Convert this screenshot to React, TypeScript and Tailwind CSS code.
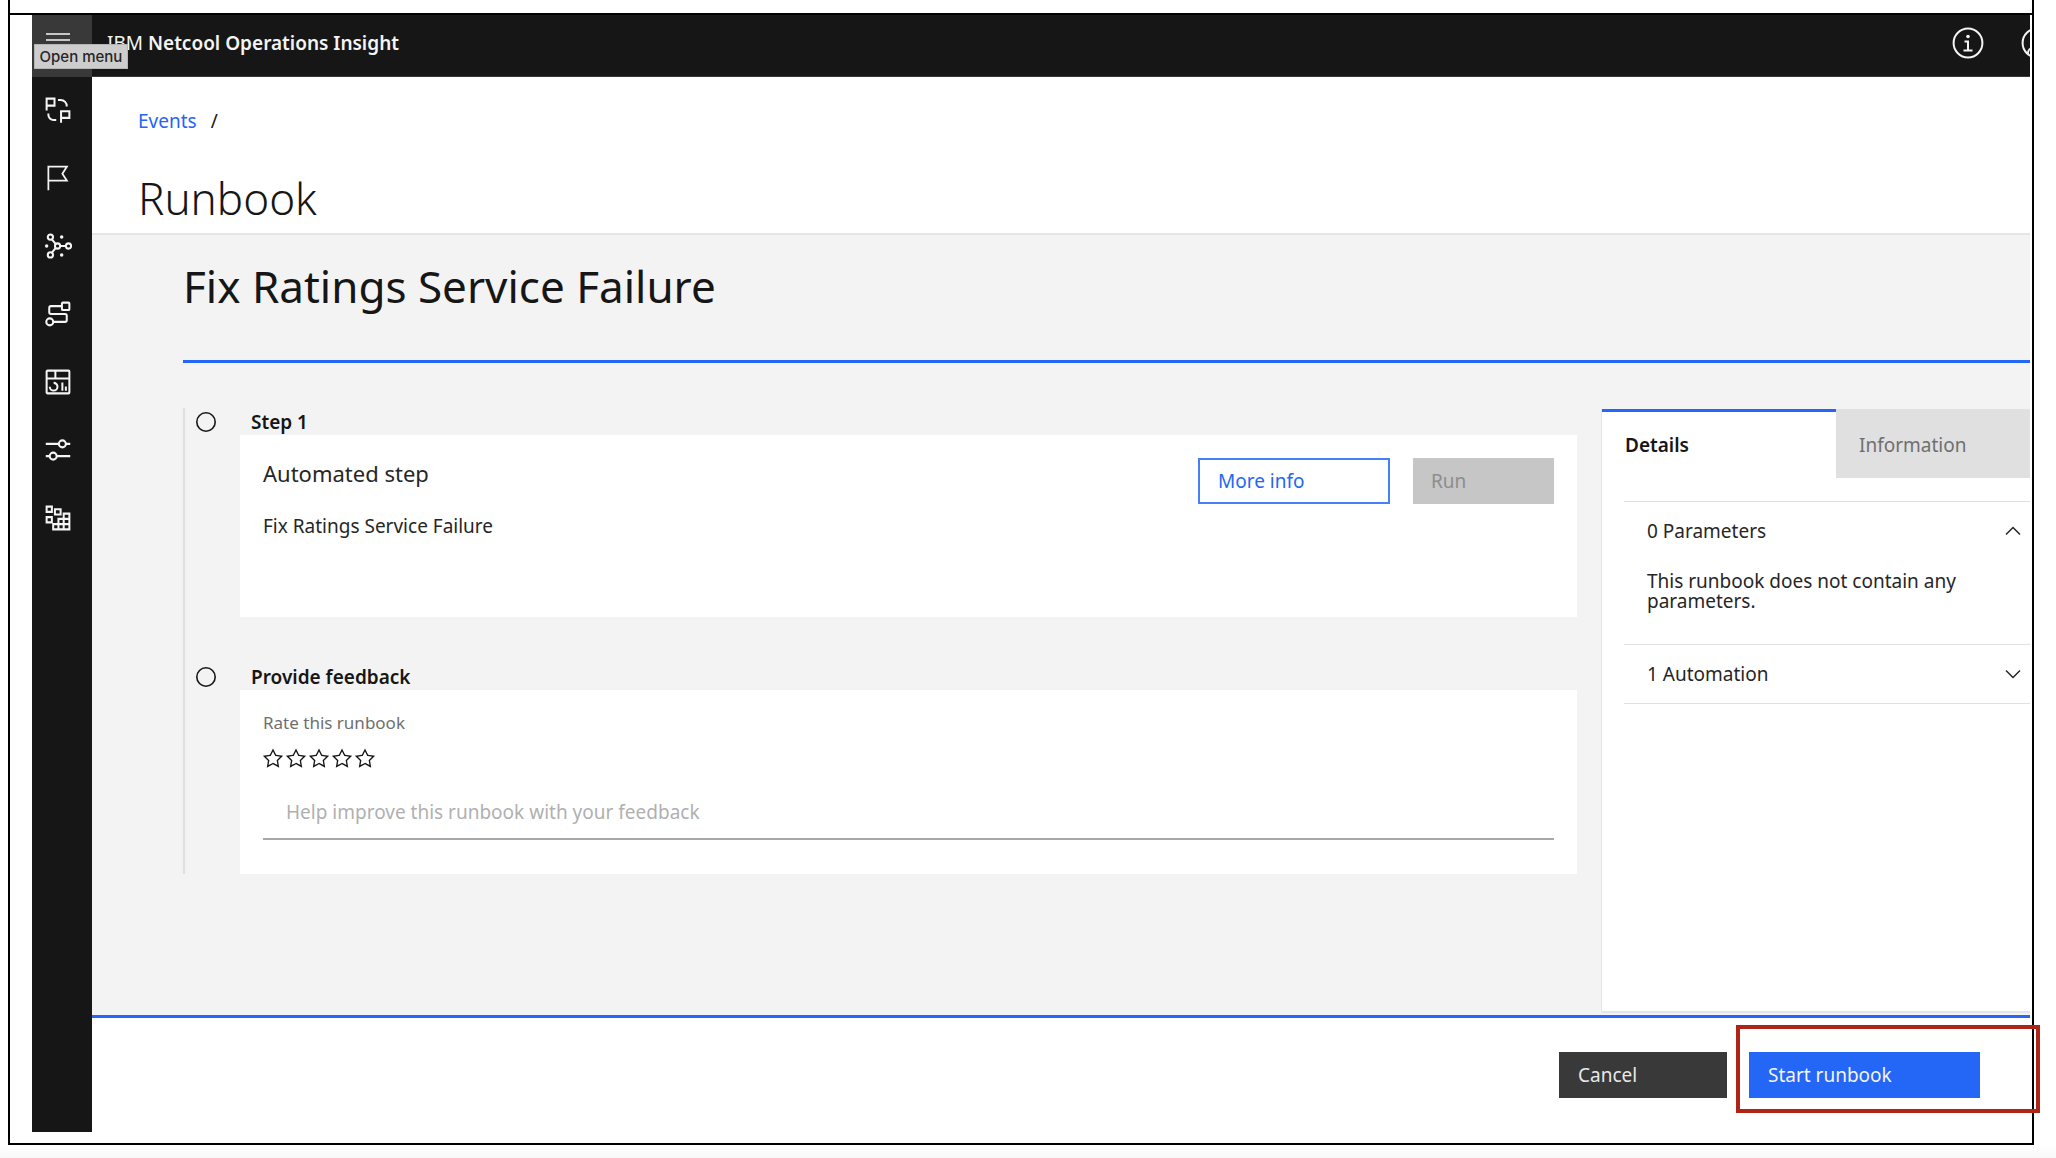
import { useState, type ReactNode } from "react";

function NavIcon({ children }: { children: ReactNode }) {
  return (
    <svg viewBox="0 0 32 32" className="size-7" fill="none" stroke="currentColor" strokeWidth={2.3} aria-hidden="true">
      {children}
    </svg>
  );
}

const navItems: { label: string; icon: ReactNode }[] = [
  {
    label: "Incidents",
    icon: (
      <>
        <path d="M3 16.5V3h9v8H3M19.5 30.5V17.5H29v7.5h-9.5" />
        <path d="M16 4.5h3a7 7 0 0 1 7 7.500M5 20v1.500a6 6 0 0 0 6 6h3" />
      </>
    ),
  },
  {
    label: "Events",
    icon: (
      <path
        stroke="none"
        fill="currentColor"
        d="M6 30H4V2h24l-5.800 9L28 20H6zM6 18h18.330L19.800 11l4.530-7H6z"
      />
    ),
  },
  {
    label: "Topology",
    icon: (
      <>
        <circle cx="7.300" cy="5.800" r="3" />
        <circle cx="15.500" cy="16" r="3" />
        <circle cx="28" cy="16" r="3" />
        <circle cx="7.300" cy="26.200" r="3" />
        <path d="M9 8.300l4.500 5.500M9 23.700l4.500-5.500M18.500 16H25" />
        <g stroke="none" fill="currentColor">
          <circle cx="20.200" cy="5.800" r="2" />
          <circle cx="3" cy="16" r="2" />
          <circle cx="20.200" cy="26.200" r="2" />
        </g>
      </>
    ),
  },
  {
    label: "Runbooks",
    icon: (
      <>
        <rect x="20.500" y="3" width="8.500" height="8.500" rx="1" />
        <circle cx="6.600" cy="25" r="4" />
        <path d="M20.500 7H8a2 2 0 0 0-2 2v5a2 2 0 0 0 2 2h16a2 2 0 0 1 2 2v5a2 2 0 0 1-2 2H10.600" />
      </>
    ),
  },
  {
    label: "Dashboards",
    icon: (
      <>
        <rect x="3" y="3" width="26" height="26" rx="1" />
        <path d="M3 12h26M13 3v9M21 16.500V26M25 21v5" />
        <path d="M11 17a4.400 4.400 0 1 1-4.400 4.400" />
      </>
    ),
  },
  {
    label: "Administration",
    icon: (
      <>
        <circle cx="21" cy="9" r="4" />
        <circle cx="10.500" cy="23" r="4" />
        <path d="M2 9h15M25 9h5M2 23h4.500M14.500 23H30" />
      </>
    ),
  },
  {
    label: "Integrations",
    icon: (
      <>
        <path d="M3 3h6v6H3zM12.500 6h6.500v6h-6.500zM3 15h6v6H3z" />
        <path d="M22.500 11H29v18H10.500v-6h6v-6h6zM16.500 23v6M22.500 17v12M16.500 23H29M22.500 17H29" />
      </>
    ),
  },
];

function StepHeading({ title }: { title: string }) {
  return (
    <div className="ml-[11px] flex h-[27px] items-center gap-[35px]">
      <svg viewBox="0 0 20 20" className="size-5 shrink-0" fill="none" stroke="#161616" strokeWidth="1.600" aria-hidden="true">
        <circle cx="10" cy="10" r="9.200" />
      </svg>
      <h3 className="text-[19px] font-semibold leading-6">{title}</h3>
    </div>
  );
}

function Rating() {
  const [value, setValue] = useState(0);
  return (
    <fieldset>
      <legend className="text-[17px] leading-6 text-[#6f6f6f]">Rate this runbook</legend>
      <div className="-ml-0.5 mt-3 flex h-[22px] items-center">
        {[1, 2, 3, 4, 5].map((n) => (
          <label key={n} className="relative flex w-[23px] cursor-pointer justify-center">
            <input
              type="radio"
              name="rating"
              aria-label={`${n} of 5`}
              className="sr-only"
              checked={value === n}
              onChange={() => setValue(n)}
            />
            <svg viewBox="0 0 32 32" className="size-[22px]" aria-hidden="true" fill="#161616">
              {value >= n ? (
                <path d="M16 2l-4.550 9.220-10.170 1.470 7.360 7.180L6.900 30 16 25.220 25.100 30l-1.740-10.130 7.360-7.170-10.170-1.480z" />
              ) : (
                <path d="M16 6.520l2.760 5.580.46 1 1 .15 6.160.89-4.380 4.300-.75.73.18 1 1.050 6.130-5.510-2.890L16 23l-.93.490-5.510 2.850 1-6.130.18-1-.74-.77-4.420-4.350 6.160-.89 1-.15.46-1zM16 2l-4.550 9.220-10.170 1.470 7.360 7.180L6.900 30 16 25.220 25.100 30l-1.740-10.130 7.360-7.170-10.170-1.480z" />
              )}
            </svg>
          </label>
        ))}
      </div>
    </fieldset>
  );
}

function AccordionItem({
  title,
  defaultOpen = false,
  children,
}: {
  title: string;
  defaultOpen?: boolean;
  children?: ReactNode;
}) {
  const [open, setOpen] = useState(defaultOpen);
  return (
    <div className="border-t border-[#e0e0e0]">
      <button
        type="button"
        aria-expanded={open}
        onClick={() => setOpen(!open)}
        className="flex h-[58px] w-full items-center justify-between pl-[23px] pr-2 text-left"
      >
        {title}
        <svg viewBox="0 0 18 18" className="size-[18px]" fill="none" stroke="currentColor" strokeWidth="1.500" aria-hidden="true">
          <path d={open ? "M2 12.500l7-7 7 7" : "M2 5.500l7 7 7-7"} />
        </svg>
      </button>
      {open && children && <div className="pb-[33px] pl-[23px] pt-[11px] leading-5">{children}</div>}
    </div>
  );
}

function Header() {
  return (
    <header className="flex h-[62px] items-start overflow-hidden border-b border-[#393939] bg-[#161616] text-[#f4f4f4]">
      <button
        type="button"
        aria-label="Open menu"
        className="flex h-full w-[60px] shrink-0 items-start bg-[#393939] pl-3.5 pt-4"
      >
        <svg viewBox="0 0 24 24" className="size-6" stroke="#c6c6c6" strokeWidth="2" aria-hidden="true">
          <path d="M0 3h24M0 9h24M0 15h24M0 21h24" />
        </svg>
      </button>
      <div className="relative flex h-14 items-center pl-[15px]">
        <div className="whitespace-pre">
          IBM <span className="font-semibold">Netcool Operations Insight</span>
        </div>
        <div
          role="tooltip"
          className="absolute -left-[58px] top-[29px] flex h-[25px] w-[94px] items-center justify-center whitespace-nowrap border border-[#b5b5b5] bg-[#cdcdcd] font-['Inter',sans-serif] text-[15px] font-medium leading-6 text-[#262626]"
        >
          Open menu
        </div>
      </div>
      <div className="-mr-[23px] ml-auto flex h-14 shrink-0 items-center gap-[37px]">
        <button type="button" aria-label="Information">
          <svg viewBox="0 0 32 32" className="size-8" fill="none" stroke="currentColor" strokeWidth="2" aria-hidden="true">
            <circle cx="16" cy="16" r="14.400" />
            <path d="M12.500 14.500H16V23.500M11.500 23.500h9" />
            <circle cx="16" cy="9.500" r="1.800" fill="currentColor" stroke="none" />
          </svg>
        </button>
        <button type="button" aria-label="User profile">
          <svg viewBox="0 0 32 32" className="size-8" fill="none" stroke="currentColor" strokeWidth="2" aria-hidden="true">
            <circle cx="16" cy="16" r="14.400" />
            <circle cx="16" cy="13" r="5" />
            <path d="M7 27v-1a5 5 0 0 1 5-5h8a5 5 0 0 1 5 5v1" />
          </svg>
        </button>
      </div>
    </header>
  );
}

export default function App() {
  const [tab, setTab] = useState<"details" | "information">("details");
  const tabBase = "h-[69px] border-t-3 pl-[23px] text-left";
  const tabOn = "border-[#2466f6] bg-white font-semibold text-[#161616]";
  const tabOff = "border-[#e0e0e0] bg-[#e0e0e0] text-[#6f6f6f]";

  return (
    <div className="flex min-h-screen flex-col bg-white pl-2 pr-[22px] font-['Noto_Sans',sans-serif] text-[19px] leading-6 text-[#161616]">
      <div className="h-[13px] border-x-2 border-black" />
      <div className="flex flex-1 flex-col border-2 border-black pb-[11px] pl-[22px] pr-0.5">
        <Header />
        <div className="flex flex-1">
          <nav aria-label="Main" className="w-[60px] shrink-0 bg-[#161616] text-[#f4f4f4]">
            <ul>
              {navItems.map((item) => (
                <li key={item.label}>
                  <a href="#" aria-label={item.label} className="flex h-[68px] items-center justify-center pb-0.5 pr-2">
                    <NavIcon>{item.icon}</NavIcon>
                  </a>
                </li>
              ))}
            </ul>
          </nav>

          <div className="flex min-w-0 flex-1 flex-col">
            <div className="border-b-2 border-[#e5e5e5] pb-[5px] pl-[46px] pt-8">
              <nav aria-label="Breadcrumb" className="flex gap-3.5">
                <a href="#" className="text-[#2466f6]">
                  Events
                </a>
                <span>/</span>
              </nav>
              <h1 className="mt-[35px] text-[44px] font-light leading-[60px]">Runbook</h1>
            </div>

            <main className="flex flex-1 flex-col bg-[#f3f3f3] pl-[91px]">
              <h2 className="border-b-3 border-[#2466f6] pb-11 pt-[21px] text-[44px] leading-[60px]">
                Fix Ratings Service Failure
              </h2>
              <div className="mb-0.5 mt-[45px] flex flex-1 gap-6">
                <ol className="flex min-w-0 flex-1 flex-col gap-[46px] self-start border-l-2 border-[#e0e0e0]">
                  <li>
                    <StepHeading title="Step 1" />
                    <div className="ml-[55px] flex min-h-[182px] gap-[23px] bg-white px-[23px] pt-[22px]">
                      <div className="flex-1">
                        <h4 className="text-[22px] leading-8 text-[#262626]">Automated step</h4>
                        <p className="mt-[25px] text-[#262626]">Fix Ratings Service Failure</p>
                      </div>
                      <button
                        type="button"
                        className="mt-px h-[46px] w-48 border-2 border-[#4580f8] pl-[18px] text-left text-[#2466f6]"
                      >
                        More info
                      </button>
                      <button
                        type="button"
                        disabled
                        className="mt-px h-[46px] w-[141px] bg-[#c6c6c6] pl-[18px] text-left text-[#8d8d8d]"
                      >
                        Run
                      </button>
                    </div>
                  </li>
                  <li>
                    <StepHeading title="Provide feedback" />
                    <div className="ml-[55px] bg-white px-[23px] pb-[34px] pt-[21px]">
                      <Rating />
                      <input
                        type="text"
                        aria-label="Feedback"
                        placeholder="Help improve this runbook with your feedback"
                        className="mt-4 block h-[55px] w-full border-b-2 border-[#a8a8a8] pl-[23px] outline-none placeholder:text-[#b0b0b0]"
                      />
                    </div>
                  </li>
                </ol>

                <aside className="mt-px w-[429px] shrink-0 border-b-2 border-l border-[#e5e5e5] bg-white">
                  <div role="tablist" className="flex">
                    <button
                      type="button"
                      role="tab"
                      aria-selected={tab === "details"}
                      onClick={() => setTab("details")}
                      className={`w-[234px] ${tabBase} ${tab === "details" ? tabOn : tabOff}`}
                    >
                      Details
                    </button>
                    <button
                      type="button"
                      role="tab"
                      aria-selected={tab === "information"}
                      onClick={() => setTab("information")}
                      className={`flex-1 ${tabBase} ${tab === "information" ? tabOn : tabOff}`}
                    >
                      Information
                    </button>
                  </div>
                  {tab === "details" && (
                    <div className="ml-[22px] mt-[23px] border-b border-[#e0e0e0] text-[#262626]">
                      <AccordionItem title="0 Parameters" defaultOpen>
                        This runbook does not contain any parameters.
                      </AccordionItem>
                      <AccordionItem title="1 Automation" />
                    </div>
                  )}
                </aside>
              </div>
            </main>

            <footer className="flex justify-end gap-[22px] border-t-3 border-[#2466f6] pb-[34px] pr-[50px] pt-[34px]">
              <button type="button" className="h-[46px] w-[168px] bg-[#393939] pl-[19px] text-left text-[#e8e8e8]">
                Cancel
              </button>
              <div className="relative">
                <button type="button" className="h-[46px] w-[231px] bg-[#2466f6] pl-[19px] text-left text-[#f4f4f4]">
                  Start runbook
                </button>
                <div className="pointer-events-none absolute -bottom-[15px] -left-[13px] -right-[60px] -top-[27px] border-4 border-[#b02418]" />
              </div>
            </footer>
          </div>
        </div>
      </div>
      <div className="-ml-2 -mr-[22px] h-[13px] bg-linear-to-b from-white to-[#f8f8f8]" />
    </div>
  );
}
